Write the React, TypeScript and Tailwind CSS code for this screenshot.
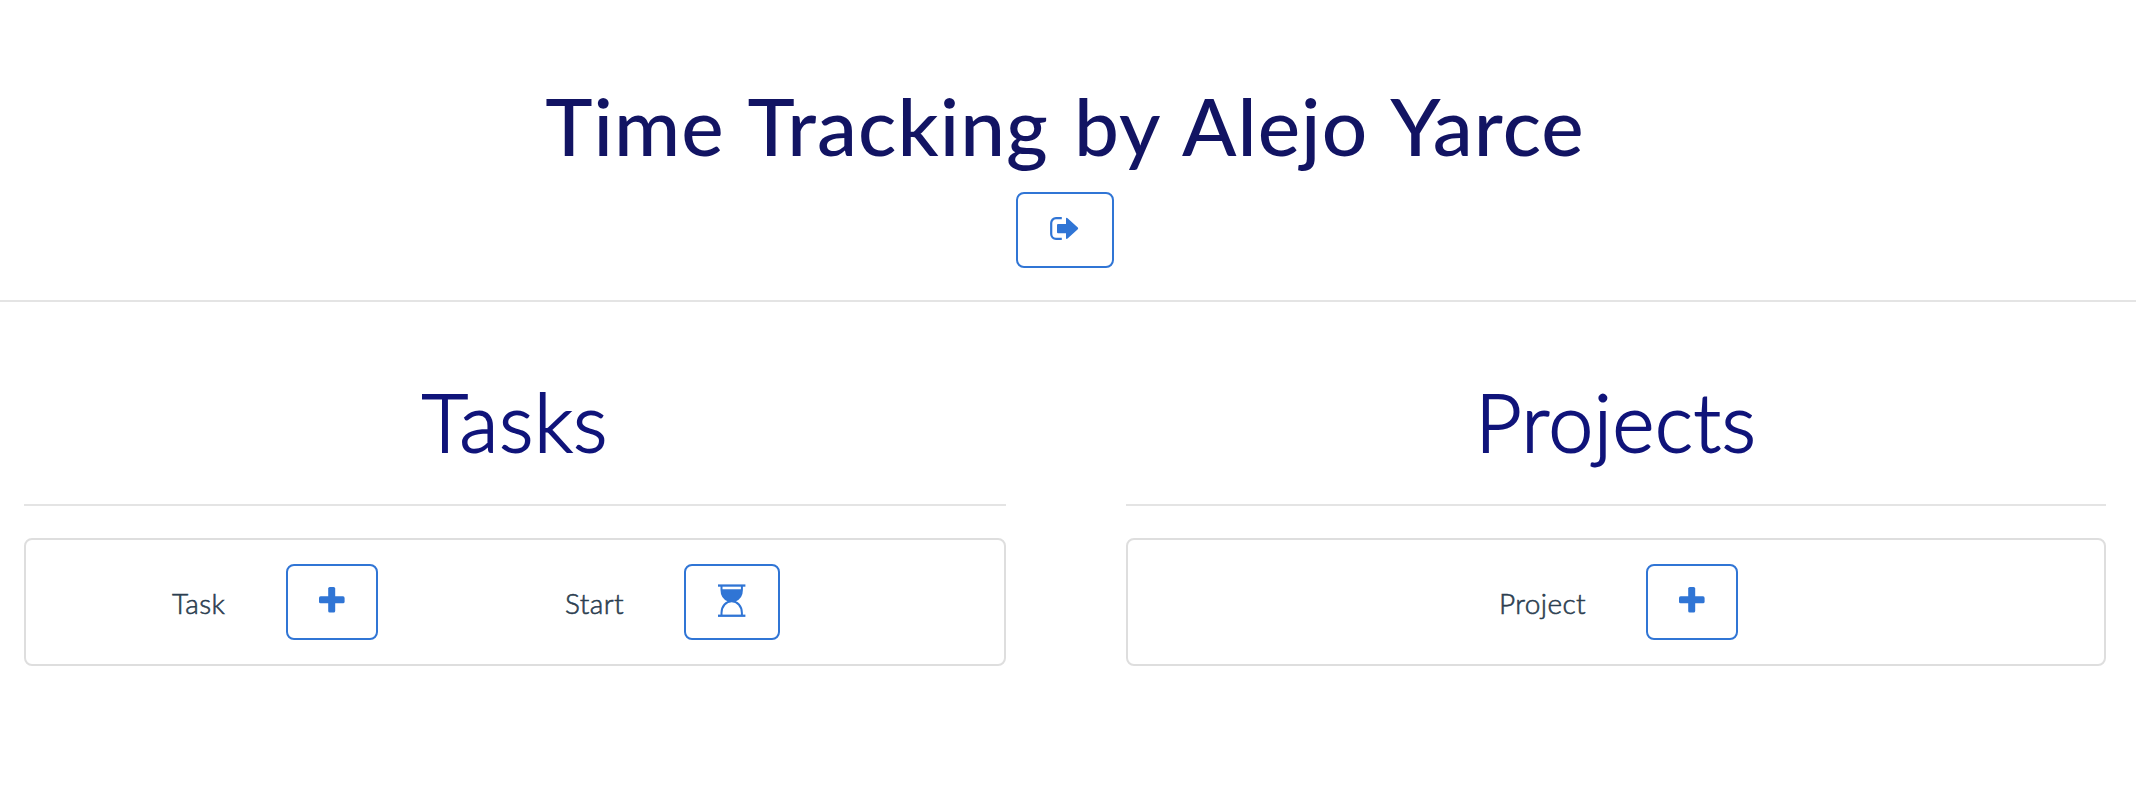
import type { ReactNode } from "react";

function ExitIcon() {
  return (
    <svg width="30" height="24" viewBox="0 0 30 24" fill="currentColor">
      <path d="M11.8 1.2H6A4.8 4.8 0 0 0 1.2 6V17A4.8 4.8 0 0 0 6 21.8H11.8" fill="none" stroke="currentColor" strokeWidth="2.2" />
      <path d="M8 7H16V1.8Q16 0 17.6 1.2L27.8 10.6Q28.6 11.4 27.8 12.2L17.6 21.6Q16 22.8 16 21V16.2H8Q7 16.2 7 15.2V8Q7 7 8 7Z" />
    </svg>
  );
}

function PlusIcon() {
  return (
    <svg width="26" height="26" viewBox="0 0 26 26" fill="currentColor">
      <rect x="9.2" y="0" width="7" height="25.6" rx="1.6" />
      <rect x="0" y="9.3" width="25.6" height="7" rx="1.6" />
    </svg>
  );
}

function HourglassIcon() {
  return (
    <svg width="28" height="34" viewBox="0 0 28 34" fill="currentColor">
      <rect x="0" y="0.4" width="27.4" height="2.3" />
      <rect x="0" y="30.6" width="27.4" height="2.3" />
      <path d="M3.5 2V6C3.5 11 6.4 15 10.4 16.6M23.9 2V6C23.9 11 21 15 17 16.6M3.5 31V29C3.5 22 8.2 17.2 13.7 17.2S23.9 22 23.9 29V31" fill="none" stroke="currentColor" strokeWidth="2" />
      <path d="M3.5 5.2H23.9C23.9 11 21.2 15 17.4 16.8V18H10V16.8C6.2 15 3.5 11 3.5 5.2Z" />
    </svg>
  );
}

function IconButton({ className, label, children }: { className: string; label: string; children: ReactNode }) {
  return (
    <button aria-label={label} className={`flex h-[76px] shrink-0 justify-center rounded-lg border-2 border-[#3075d5] text-[#3075d5] ${className}`}>
      {children}
    </button>
  );
}

function FieldLabel({ className, children }: { className: string; children: ReactNode }) {
  return (
    <span className={`pt-[22px] text-[28px] font-light leading-[34px] tracking-[0.4px] [-webkit-text-stroke:0.6px_currentColor] ${className}`}>
      {children}
    </span>
  );
}

export default function App() {
  return (
    <div className="h-[796px] w-[2146px] overflow-hidden bg-white font-['Lato',sans-serif] text-[#2c3e50]">
      <header className="flex h-[302px] w-[2136px] flex-col items-center border-b-2 border-[#e4e4e4] pt-[77px]">
        <h1 className="ml-[-6px] whitespace-nowrap text-[80px] font-medium leading-[96px] tracking-[1.05px] [word-spacing:4px] text-[#121463]">
          Time Tracking by Alejo Yarce
        </h1>
        <IconButton label="Sign out" className="mt-[19px] ml-[-6px] w-[98px] pt-[23px]">
          <ExitIcon />
        </IconButton>
      </header>
      <main className="flex gap-[120px] pl-6">
        <section className="w-[982px]">
          <h2 className="h-[204px] border-b-2 border-[#e4e4e4] pt-[71px] text-center text-[80px] font-light leading-[96px] tracking-[1px] [-webkit-text-stroke:1.8px_currentColor] text-[#10147a]">
            Tasks
          </h2>
          <div className="mt-8 flex h-32 rounded-lg border-2 border-[#dedede] pt-6">
            <FieldLabel className="ml-[146px] w-[114px]">Task</FieldLabel>
            <IconButton label="Add task" className="w-[92px] pt-[21px]">
              <PlusIcon />
            </IconButton>
            <FieldLabel className="ml-[187px] w-[119px]">Start</FieldLabel>
            <IconButton label="Start timer" className="w-24 pt-[18px]">
              <HourglassIcon />
            </IconButton>
          </div>
        </section>
        <section className="w-[980px]">
          <h2 className="h-[204px] border-b-2 border-[#e4e4e4] pt-[71px] text-center text-[80px] font-light leading-[96px] tracking-[0.8px] [-webkit-text-stroke:1.8px_currentColor] text-[#10147a]">
            Projects
          </h2>
          <div className="mt-8 flex h-32 rounded-lg border-2 border-[#dedede] pt-6">
            <FieldLabel className="ml-[371px] w-[147px]">Project</FieldLabel>
            <IconButton label="Add project" className="w-[92px] pt-[21px]">
              <PlusIcon />
            </IconButton>
          </div>
        </section>
      </main>
    </div>
  );
}
